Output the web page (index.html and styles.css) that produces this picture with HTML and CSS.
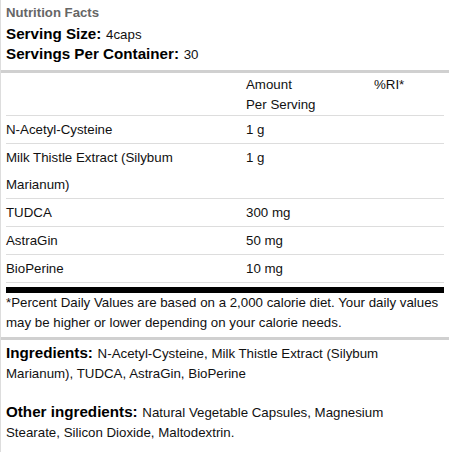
FILE: index.html
```html
<!DOCTYPE html>
<html lang="en">
<head>
    <meta charset="UTF-8">
    <meta name="viewport" content="width=device-width, initial-scale=1.0">
    <title>Nutrition Facts</title>
    <link rel="stylesheet" href="styles.css">
</head>
<body>
    <div class="facts">
        <div class="facts-head">
            <div class="title">Nutrition Facts</div>
            <div><b class="label">Serving Size:</b> 4caps</div>
            <div><b class="label">Servings Per Container:</b> 30</div>
        </div>
        <div class="sep"></div>
        <div class="facts-body">
            <table class="facts-table">
                <thead>
                    <tr>
                        <th class="col-name"></th>
                        <th class="col-amount">Amount<br>Per Serving</th>
                        <th class="col-ri">%RI*</th>
                    </tr>
                </thead>
                <tbody>
                    <tr><td>N-Acetyl-Cysteine</td><td>1 g</td><td></td></tr>
                    <tr><td>Milk Thistle Extract (Silybum Marianum)</td><td>1 g</td><td></td></tr>
                    <tr><td>TUDCA</td><td>300 mg</td><td></td></tr>
                    <tr><td>AstraGin</td><td>50 mg</td><td></td></tr>
                    <tr><td>BioPerine</td><td>10 mg</td><td></td></tr>
                </tbody>
            </table>
            <div class="bar"></div>
            <p class="note">*Percent Daily Values are based on a 2,000 calorie diet. Your daily values may be higher or lower depending on your calorie needs.</p>
        </div>
        <div class="sep"></div>
        <div class="ingredients">
            <p><b class="label">Ingredients:</b> N-Acetyl-Cysteine, Milk Thistle Extract (Silybum Marianum), TUDCA, AstraGin, BioPerine</p>
            <p><b class="label">Other ingredients:</b> Natural Vegetable Capsules, Magnesium Stearate, Silicon Dioxide, Maltodextrin.</p>
        </div>
    </div>
</body>
</html>
```

FILE: styles.css
```css
* {
    font-family: 'Liberation Sans', Arial, sans-serif;
    box-sizing: border-box;
}
body {
    margin: 0;
    padding: 0;
    background-color: #fff;
    color: #111;
    font-size: 13.3px;
    line-height: 20px;
}
.facts {
    border-left: 1px solid #ddd;
    min-height: 452px;
    width: 460px;
}
.facts-head {
    padding: 3px 5px 5px 5px;
}
.facts-head div {
    height: 20px;
}
.title {
    color: #666;
    font-weight: bold;
    font-size: 13.2px;
    margin-bottom: 2px;
}
.label {
    font-size: 15.2px;
    line-height: 1;
    color: #000;
    margin-right: 1px;
}
.sep {
    height: 3px;
    background-color: #d0d0d0;
}
.facts-body {
    padding: 0 0 4px 5px;
}
.facts-table {
    width: 438px;
    border-collapse: collapse;
}
.facts-table th {
    font-weight: normal;
    text-align: left;
    vertical-align: top;
    padding: 2px 0 0 0;
    line-height: 20px;
    border-bottom: 1px solid #ddd;
}
.facts-table td {
    padding: 0 12px 0 0;
    line-height: 27px;
    vertical-align: top;
    border-bottom: 1px solid #ddd;
}
.col-name {
    width: 240px;
}
.col-amount {
    width: 128px;
}
.bar {
    width: 438px;
    height: 6px;
    margin-top: 4px;
    background-color: #000;
}
.note {
    margin: 0;
    width: 440px;
}
.ingredients {
    padding: 4px 5px 0 5px;
    width: 400px;
}
.ingredients p {
    margin: 0 0 19px 0;
}
```
